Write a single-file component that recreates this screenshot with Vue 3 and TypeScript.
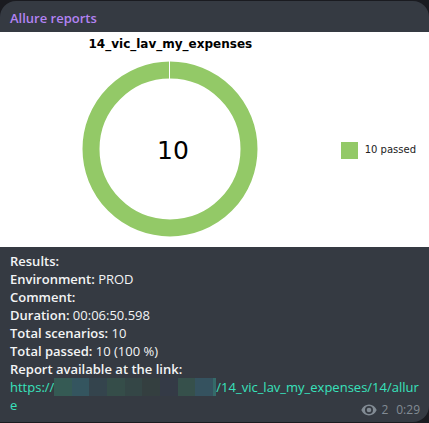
<script setup lang="ts">
interface ResultLine {
  label: string
  value?: string
}

const sender = 'Allure reports'
const project = '14_vic_lav_my_expenses'
const passed = 10

const results: ResultLine[] = [
  { label: 'Results:' },
  { label: 'Environment:', value: 'PROD' },
  { label: 'Comment:' },
  { label: 'Duration:', value: '00:06:50.598' },
  { label: 'Total scenarios:', value: '10' },
  { label: 'Total passed:', value: '10 (100 %)' },
  { label: 'Report available at the link:' },
]
</script>

<template>
  <main class="chat">
    <article class="message">
      <header class="sender">{{ sender }}</header>

      <figure class="chart">
        <div class="plot">
          <figcaption class="chart-title">{{ project }}</figcaption>
          <svg class="ring" viewBox="0 0 176 176" role="img" aria-label="10 passed">
            <circle cx="88" cy="88" r="79" fill="none" stroke="#93c967" stroke-width="17" />
            <path d="M87.5 0V18" stroke="#fff" stroke-width="1" />
            <text x="91" y="98" text-anchor="middle" class="total">{{ passed }}</text>
          </svg>
        </div>
        <div class="legend">
          <span class="swatch"></span>
          <span>{{ passed }} passed</span>
        </div>
      </figure>

      <div class="body">
        <p v-for="line in results" :key="line.label" class="line">
          <strong>{{ line.label }}</strong>
          <template v-if="line.value">{{ ' ' + line.value }}</template>
        </p>
        <div class="report">
          <a class="link" href="#">https://<span class="redacted"></span>/{{ project }}/14/allure</a>
          <span class="meta">
            <svg class="eye" viewBox="0 0 16 12" aria-hidden="true">
              <path
                fill-rule="evenodd"
                d="M8 .5C4.5.5 1.7 2.7.3 6c1.4 3.3 4.2 5.5 7.7 5.5s6.3-2.2 7.7-5.5C14.3 2.7 11.5.5 8 .5ZM8 2a4 4 0 1 1 0 8 4 4 0 0 1 0-8Z"
              />
              <circle cx="8" cy="6" r="2.3" />
            </svg>
            <span>2</span>
            <time>0:29</time>
          </span>
        </div>
      </div>
    </article>
  </main>
</template>

<style>
body {
  margin: 0;
  background: #1a1b20;
}
</style>

<style scoped>
.chat {
  padding: 1px 0;
  background: #1a1b20;
  font: 13px/18px 'Open Sans', 'Noto Sans', sans-serif;
  color: #f3f4f5;
}

.message {
  overflow: hidden;
  border-radius: 16px 16px 16px 0;
  background: #353a42;
}

.sender {
  padding: 8px 10px 5px;
  font-weight: 600;
  color: #b383f3;
}

.chart {
  display: flex;
  align-items: stretch;
  margin: 0;
  padding: 3px 13px 10px 0;
  background: #fff;
  font-family: 'DejaVu Sans', sans-serif;
  color: #000;
}

.plot {
  flex: 1;
  display: flex;
  flex-direction: column;
  align-items: center;
  gap: 8px;
}

.chart-title {
  font-size: 12px;
  font-weight: 700;
}

.ring {
  display: block;
  width: 176px;
  height: 176px;
}

.total {
  font-size: 25px;
}

.legend {
  display: flex;
  align-items: center;
  gap: 7px;
  padding-top: 28px;
  font-size: 10px;
  color: #222;
}

.swatch {
  width: 17px;
  height: 17px;
  background: #93c967;
}

.body {
  padding: 5px 9px 3px 10px;
}

.line {
  margin: 0;
}

.line strong {
  font-weight: 600;
}

.report {
  display: flow-root;
}

.link {
  overflow-wrap: anywhere;
  word-break: break-all;
  color: #38e2bd;
  text-decoration: none;
}

.redacted {
  display: inline-block;
  width: 162px;
  height: 18px;
  vertical-align: top;
  background: linear-gradient(
    90deg,
    #355a54 0 18px,
    #34555f 18px 35px,
    #34444d 35px 53px,
    #354d49 53px 71px,
    #344646 71px 88px,
    #343f40 88px 106px,
    #343a46 106px 124px,
    #36504b 124px 141px,
    #35525f 141px 159px,
    #356a69 159px
  );
}

.meta {
  float: right;
  display: flex;
  align-items: center;
  gap: 8px;
  margin-top: 5px;
  font-size: 12px;
  color: #828b94;
}

.eye {
  width: 16px;
  height: 12px;
  margin-right: -4px;
  fill: currentColor;
}
</style>
